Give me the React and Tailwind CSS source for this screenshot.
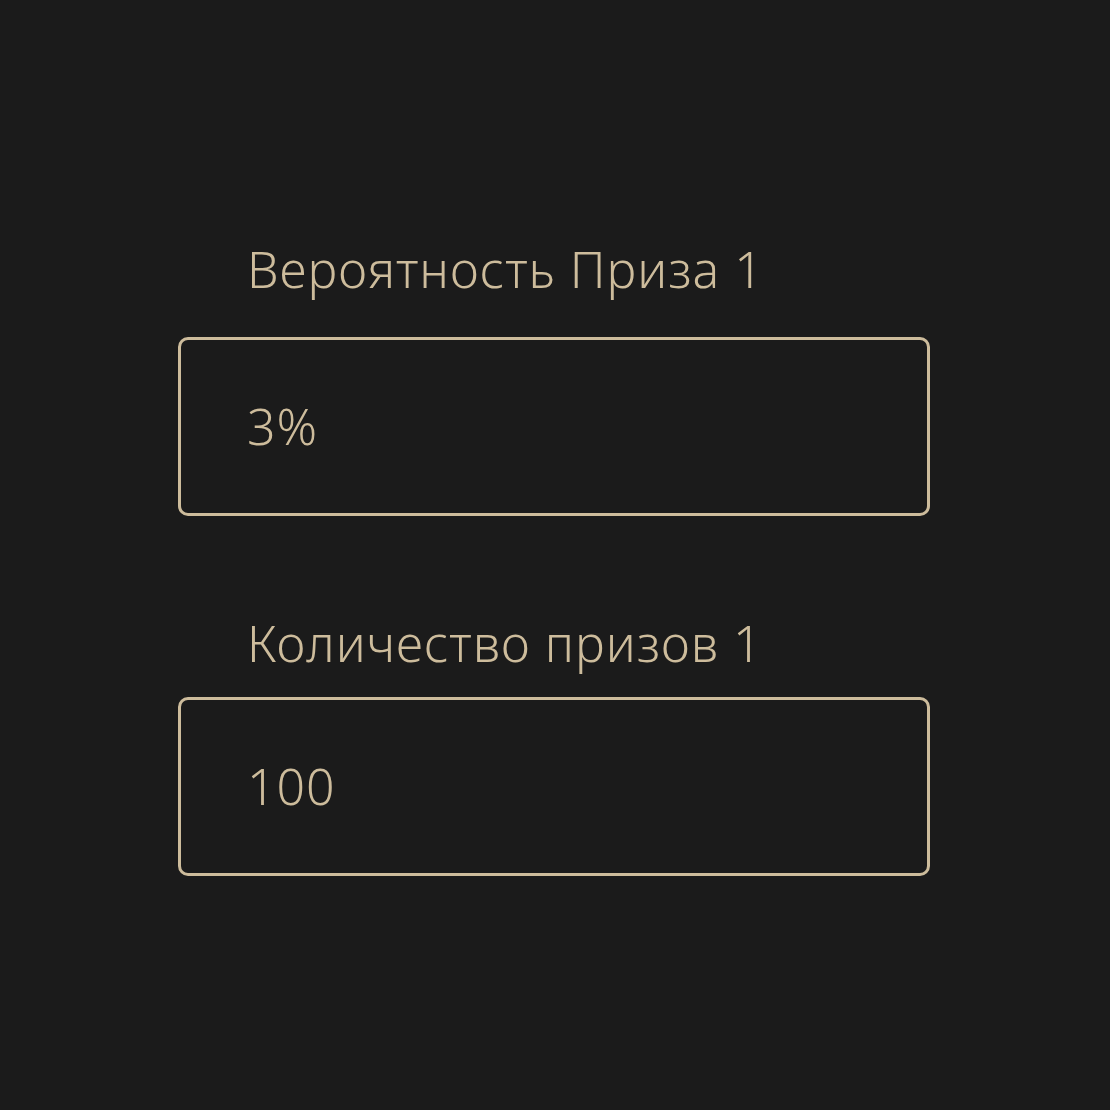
const fields = [
  { label: 'Вероятность Приза 1', value: '3%', gap: 'mb-[40px]' },
  { label: 'Количество призов 1', value: '100', gap: 'mb-[26px]' },
];

export default function App() {
  return (
    <div
      className="min-h-[1110px] w-[1110px] bg-[#1b1b1b] pt-[241px] pl-[178px] text-[#cdbc9c]"
      style={{ fontFamily: '"Noto Sans", sans-serif' }}
    >
      <div className="flex w-[752px] flex-col gap-[99px]">
        {fields.map((f) => (
          <div key={f.label}>
            <div className={`pl-[69px] text-[50px] font-light leading-[56px] tracking-[1px] ${f.gap}`}>{f.label}</div>
            <div className="flex h-[179px] items-center rounded-[10px] border-[3px] border-[#cdbc9c] pl-[66px] text-[50px] font-light tracking-[1px]">
              {f.value}
            </div>
          </div>
        ))}
      </div>
    </div>
  );
}
